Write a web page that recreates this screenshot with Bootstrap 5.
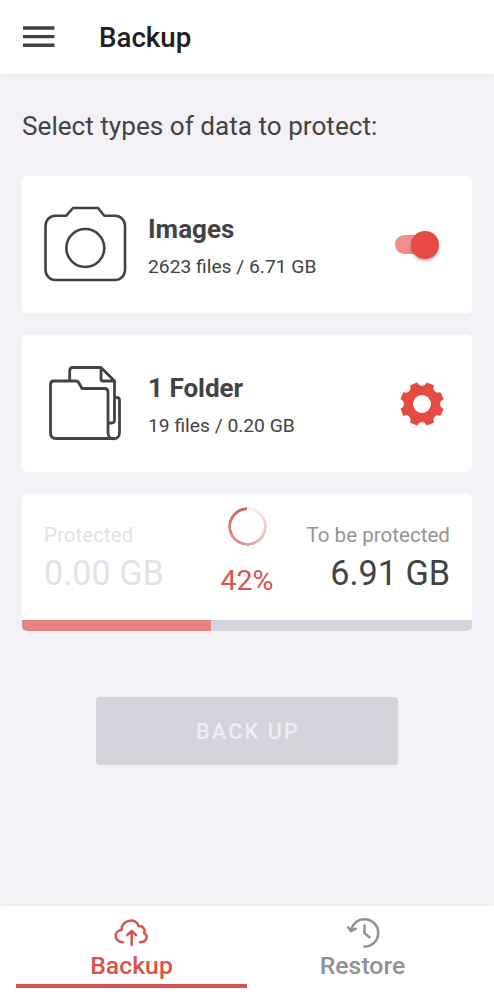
<!DOCTYPE html>
<html lang="en">
<head>
<meta charset="utf-8">
<meta name="viewport" content="width=device-width, initial-scale=1">
<title>Backup</title>
<link rel="stylesheet" href="https://cdn.jsdelivr.net/npm/bootstrap@5.3.0/dist/css/bootstrap.min.css">
<style>
body{font-family:Roboto,"Liberation Sans",sans-serif;background:#f3f1f6;color:#434345;height:1000px;overflow:hidden}
svg{display:block;flex:none}
.topbar{height:74px;padding:0 22px;box-shadow:0 1px 3px rgba(0,0,0,.03)}
.topbar h1{font-size:27.700px;font-weight:500;line-height:32px;color:#202022;margin:1px 0 0 44px}
.intro{font-size:26.150px;line-height:32px;margin:36px 0 34px}
.panel{border:0;border-radius:5px;--bs-card-color:#434345;box-shadow:0 0 2px rgba(255,255,255,.8)}
.source{height:137px;margin-bottom:22px;padding:0 22px}
.glyph{width:104px}
.source h2{font-size:26px;line-height:32px;font-weight:700;margin:6px 0 6px}
.source p{font-size:19.250px;line-height:32px;margin:0}
.toggle{width:44px;height:28px;margin-right:11px}
.toggle i{display:block;width:36px;height:19px;border-radius:10px;background:#ef8d88}
.toggle b{position:absolute;right:0;top:0;width:28px;height:28px;border-radius:50%;background:#e64a43;box-shadow:0 2px 3px rgba(0,0,0,.28)}
.summary{height:137px;overflow:hidden}
.figures{height:126px;padding:26px 22px 0}
.caption-line{font-size:20.600px;line-height:30px;white-space:nowrap}
.amount{font-size:34.200px;line-height:46px}
.faded{color:#e3e1e5}
.muted{color:#949496}
.meter{height:11px;border-radius:0;--bs-progress-bg:#d5d4de;--bs-progress-bar-bg:#e48380}
.ring{width:39px;height:39px;border-radius:50%;background:conic-gradient(#fff5f5,#f4cbcb 25%,#e79b98 50%,#e17a76 75%,#d65a56);-webkit-mask:radial-gradient(closest-side,transparent 16px,#000 16.7px,#000 19px,transparent 19.5px);mask:radial-gradient(closest-side,transparent 16px,#000 16.7px,#000 19px,transparent 19.5px)}
.middle{width:60px;margin-top:-13px}
.percent{font-size:28.5px;line-height:34px;color:#dd544b;margin-top:18px}
.action{width:302px;height:68px;margin-top:66px;border:0;border-radius:4px;font-size:21.500px;font-weight:500;letter-spacing:2.200px;padding:8px 12px 6px 14px;--bs-btn-disabled-bg:#d5d4dc;--bs-btn-disabled-color:#efedf9;--bs-btn-disabled-opacity:1}
.tabs{height:94px;padding:0 16px;box-shadow:0 -1px 3px rgba(0,0,0,.02)}
.tabs a{width:231px;height:82px;padding-top:11px;font-size:24.800px;line-height:30px;font-weight:500;text-decoration:none;color:#919193;border-bottom:4px solid transparent}
.tabs a.active{color:#d9534c;border-color:#d9534c}
</style>
</head>
<body class="d-flex flex-column">
<header class="topbar bg-white d-flex align-items-center">
  <svg width="33" height="22" fill="#434345"><path d="M1 .3h31.500v3.400h-31.500zM1 9h31.500v3.300h-31.500zM1 17.600h31.500v3.400h-31.500z"/></svg>
  <h1>Backup</h1>
</header>
<main class="flex-grow-1 d-flex flex-column" style="padding:0 22px">
  <p class="intro">Select types of data to protect:</p>
  <section class="card panel source flex-row align-items-center">
    <div class="glyph">
      <svg width="84" height="77" viewBox="44 206 84 77" fill="none" stroke="#434345" stroke-width="2.600" stroke-linejoin="round"><path d="M55.500 215.700H66.300L73 208H98L104.300 215.700H115A10 10 0 0 1 125 225.700V270A10 10 0 0 1 115 280H55.500A10 10 0 0 1 45.500 270V225.700A10 10 0 0 1 55.500 215.700Z"/><circle cx="85.300" cy="248" r="19"/></svg>
    </div>
    <div class="flex-grow-1"><h2>Images</h2><p>2623 files / 6.71 GB</p></div>
    <div class="toggle position-relative d-flex align-items-center"><i></i><b></b></div>
  </section>
  <section class="card panel source flex-row align-items-center">
    <div class="glyph">
      <svg width="84" height="77" viewBox="44 365 84 77" fill="none" stroke="#434345" stroke-width="2.800" stroke-linejoin="round" stroke-linecap="round"><path d="M54 381H76Q78 381 79 383L82 388.500H104.500Q108 388.500 108 392V432.500C108 441 119.500 441 119.500 432.500V400Q119.500 397.500 116.500 397.500M54 381Q50.500 381 50.500 384.500V433Q50.500 438.500 56 438.500H114M69.700 380V371Q69.700 367.500 73 367.500H101L114.500 381V420Q114.500 423 111.500 423H109M101 368V379Q101 381 103 381H114"/></svg>
    </div>
    <div class="flex-grow-1"><h2>1 Folder</h2><p>19 files / 0.20 GB</p></div>
    <svg width="44" height="44" viewBox="-22 -22 44 44" style="margin-right:6px">
      <path fill="#e64a40" stroke="#e64a40" stroke-width="2" stroke-linejoin="round" fill-rule="evenodd" d="M5.070 -20.380L10.820 -18A5.500 5.500 0 0 0 18 -10.820L20.380 -5.070A5.500 5.500 0 0 0 20.380 5.070L18 10.820A5.500 5.500 0 0 0 10.820 18L5.070 20.380A5.500 5.500 0 0 0 -5.070 20.380L-10.820 18A5.500 5.500 0 0 0 -18 10.820L-20.380 5.070A5.500 5.500 0 0 0 -20.380 -5.070L-18 -10.820A5.500 5.500 0 0 0 -10.820 -18L-5.070 -20.380A5.500 5.500 0 0 0 5.070 -20.380ZM10 0A10 10 0 1 1 -10 0A10 10 0 1 1 10 0Z"/>
    </svg>
  </section>
  <section class="card panel summary">
    <div class="figures d-flex justify-content-between">
      <div class="faded" style="width:144px"><div class="caption-line">Protected</div><div class="amount">0.00 GB</div></div>
      <div class="middle d-flex flex-column align-items-center"><div class="ring"></div><div class="percent">42%</div></div>
      <div class="text-end" style="width:144px"><div class="caption-line muted">To be protected</div><div class="amount">6.91 GB</div></div>
    </div>
    <div class="progress meter"><div class="progress-bar" style="width:42%"></div></div>
  </section>
  <button class="btn action align-self-center" disabled>BACK UP</button>
</main>
<nav class="tabs bg-white d-flex">
  <a class="active d-flex flex-column align-items-center" href="#">
    <svg width="36" height="34" viewBox="113.500 917 36 34" fill="none" stroke="currentColor" stroke-width="2.500" stroke-linecap="round" stroke-linejoin="round"><path d="M122.500 942.300C112.500 941.500 113.500 930.500 121 930C121.500 918 137 918.500 138 926C144 926 145 931 143.500 933C148.500 936 146 942.300 139.500 942.300M131.200 945V931M126.800 935.200L131.200 930.800L135.600 935.200"/></svg>
    <span>Backup</span>
  </a>
  <a class="d-flex flex-column align-items-center" href="#">
    <svg width="36" height="34" viewBox="344.500 917 36 34" fill="none" stroke="currentColor" stroke-width="2.500" stroke-linecap="round" stroke-linejoin="round"><path d="M350.500 930C353 922.500 358 919.200 364 919.200A13.700 13.700 0 0 1 364 946.600M347.800 927.300L350.300 931.200L355.200 928.700M364 925.500V933.300L369 937.200"/></svg>
    <span>Restore</span>
  </a>
</nav>
<script src="https://cdn.jsdelivr.net/npm/bootstrap@5.3.0/dist/js/bootstrap.bundle.min.js"></script>
</body>
</html>
